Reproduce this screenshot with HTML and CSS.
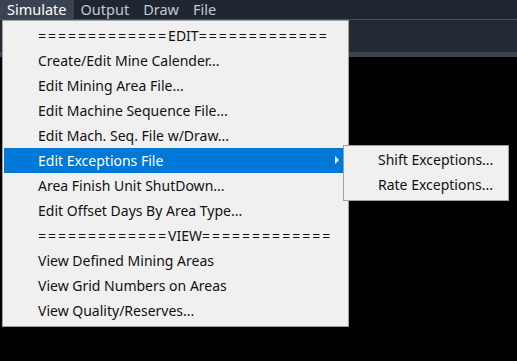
FILE: index.html
```html
<!DOCTYPE html>
<html lang="en">
<head>
    <meta charset="UTF-8">
    <meta name="viewport" content="width=device-width, initial-scale=1.0">
    <title>Simulate</title>
    <link rel="stylesheet" href="styles.css">
</head>
<body>

    <div class="menubar">
        <span class="top-item active">Simulate</span>
        <span class="top-item">Output</span>
        <span class="top-item">Draw</span>
        <span class="top-item">File</span>
    </div>
    <div class="toolbar"></div>
    <div class="band"></div>
    <div class="canvas"></div>

    <!-- Simulate dropdown -->
    <ul class="menu">
        <li><span class="eq">=============</span>EDIT<span class="eq">=============</span></li>
        <li>Create/Edit Mine Calender...</li>
        <li>Edit Mining Area File...</li>
        <li>Edit Machine Sequence File...</li>
        <li>Edit Mach. Seq. File w/Draw...</li>
        <li class="selected">Edit Exceptions File <span class="arrow"></span></li>
        <li>Area Finish Unit ShutDown...</li>
        <li>Edit Offset Days By Area Type...</li>
        <li><span class="eq">=============</span>VIEW<span class="eq">=============</span></li>
        <li>View Defined Mining Areas</li>
        <li>View Grid Numbers on Areas</li>
        <li>View Quality/Reserves...</li>
    </ul>

    <!-- Exceptions submenu -->
    <ul class="menu submenu">
        <li>Shift Exceptions...</li>
        <li>Rate Exceptions...</li>
    </ul>

</body>
</html>
```

FILE: styles.css
```css
body {
    margin: 0;
    background-color: #000;
    font-family: "Noto Sans", "Open Sans", sans-serif;
    font-size: 14px;
    height: 361px;
    overflow: hidden;
}
.menubar {
    display: flex;
    height: 19px;
    background-color: #1f2631;
    border-bottom: 1px solid #474f5b;
}
.top-item {
    padding: 0 7px;
    line-height: 19px;
    color: #c5c9cf;
    font-size: 14.5px;
}
.top-item.active {
    background-color: #3a4351;
    color: #fff;
}
.toolbar {
    height: 32px;
    background-color: #232a35;
}
.band {
    height: 5px;
    background-color: #3b4654;
}
.menu {
    position: absolute;
    left: 2px;
    top: 20px;
    width: 345px;
    margin: 0;
    padding: 2px 0 3px 0;
    list-style: none;
    background-color: #f0f0f0;
    border: 1px solid #a0a0a0;
}
.menu li {
    position: relative;
    height: 25px;
    line-height: 25px;
    padding-left: 34px;
    margin: 0 2px 0 1px;
    color: #111;
    white-space: nowrap;
}
.menu li.selected {
    background-color: #0078d7;
    color: #fff;
}
.eq {
    letter-spacing: 2px;
}
.arrow {
    position: absolute;
    right: 7px;
    top: 8px;
    width: 0;
    height: 0;
    border-top: 4px solid transparent;
    border-bottom: 4px solid transparent;
    border-left: 4px solid #fff;
}
.submenu {
    left: 343px;
    top: 145px;
    width: 164px;
    padding: 1px 0 3px 0;
}
.submenu li {
    padding-left: 33px;
}
```
